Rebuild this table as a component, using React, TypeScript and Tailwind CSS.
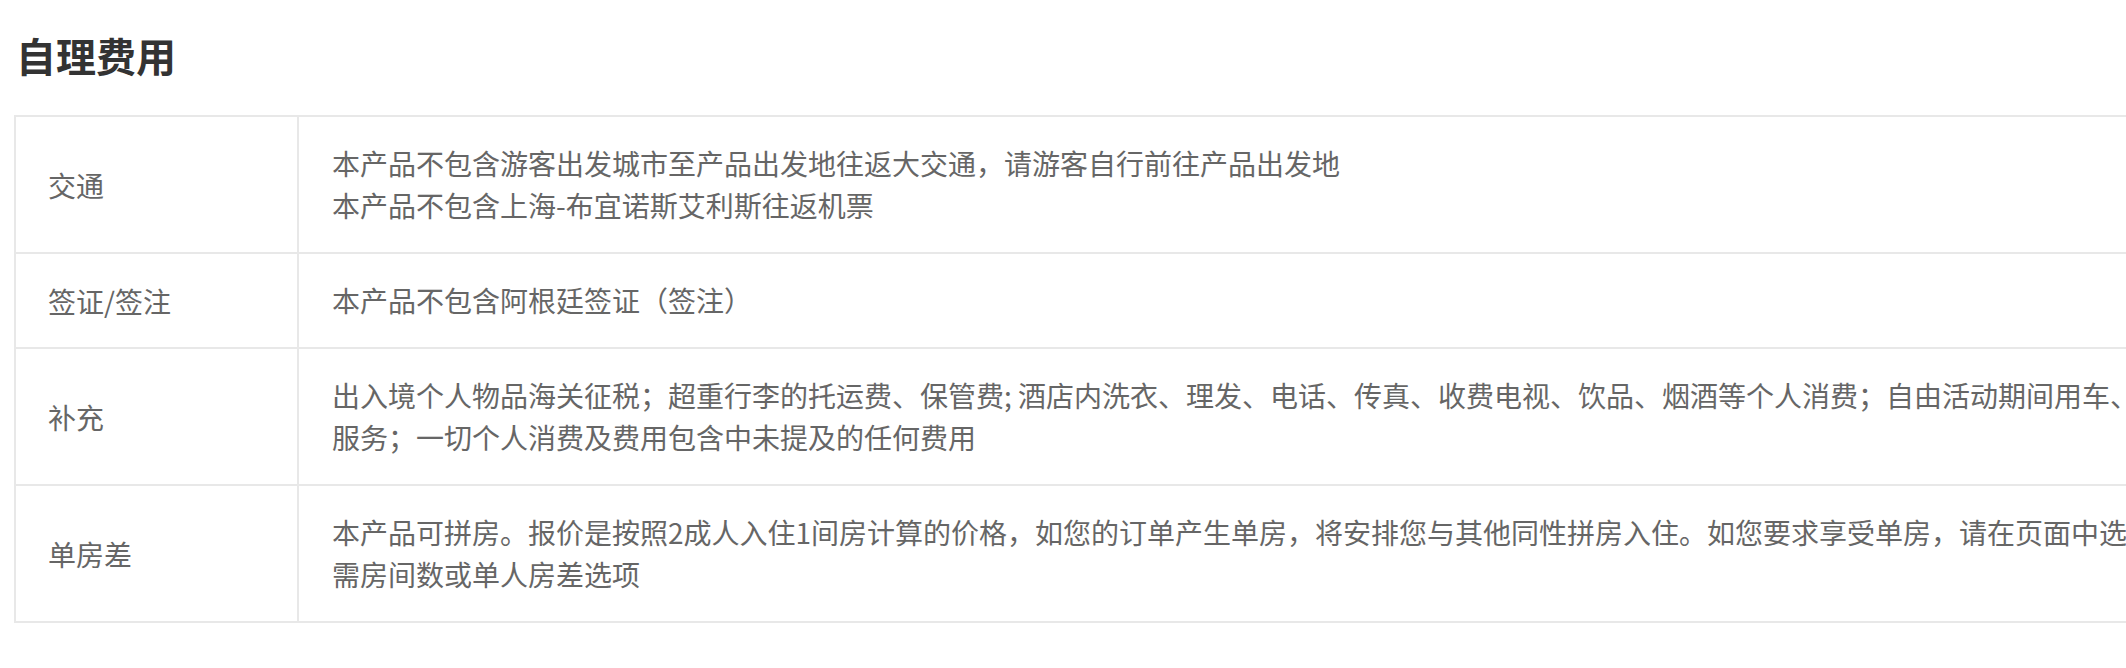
const rows: { label: string; lines: string[] }[] = [
  {
    label: "交通",
    lines: [
      "本产品不包含游客出发城市至产品出发地往返大交通，请游客自行前往产品出发地",
      "本产品不包含上海-布宜诺斯艾利斯往返机票",
    ],
  },
  {
    label: "签证/签注",
    lines: ["本产品不包含阿根廷签证（签注）"],
  },
  {
    label: "补充",
    lines: [
      "出入境个人物品海关征税；超重行李的托运费、保管费; 酒店内洗衣、理发、电话、传真、收费电视、饮品、烟酒等个人消费；自由活动期间用车、导游",
      "服务；一切个人消费及费用包含中未提及的任何费用",
    ],
  },
  {
    label: "单房差",
    lines: [
      "本产品可拼房。报价是按照2成人入住1间房计算的价格，如您的订单产生单房，将安排您与其他同性拼房入住。如您要求享受单房，请在页面中选择所",
      "需房间数或单人房差选项",
    ],
  },
];

export default function App() {
  return (
    <div className="w-[2126px] h-[668px] overflow-hidden bg-white pl-[14px] pt-[35px] font-['Noto_Sans_CJK_SC','Noto_Sans',sans-serif]">
      <h2 className="pl-[2px] text-[40px] leading-[40px] font-bold text-[#333]">自理费用</h2>

      <div className="mt-[40px] w-[2400px] border-l-2 border-t-2 border-[#e8e8e8]">
        {rows.map((row) => (
          <div key={row.label} className="flex border-b-2 border-[#e8e8e8]">
            <div className="flex w-[283px] shrink-0 items-center border-r-2 border-[#e8e8e8] px-[32px] text-[28px] leading-[42px] text-[#666]">
              {row.label}
            </div>
            <div className="flex-1 whitespace-nowrap px-[33px] pt-[25px] pb-[26px] text-[28px] leading-[42px] text-[#666]">
              {row.lines.map((line, i) => (
                <div key={i}>{line}</div>
              ))}
            </div>
          </div>
        ))}
      </div>
    </div>
  );
}
